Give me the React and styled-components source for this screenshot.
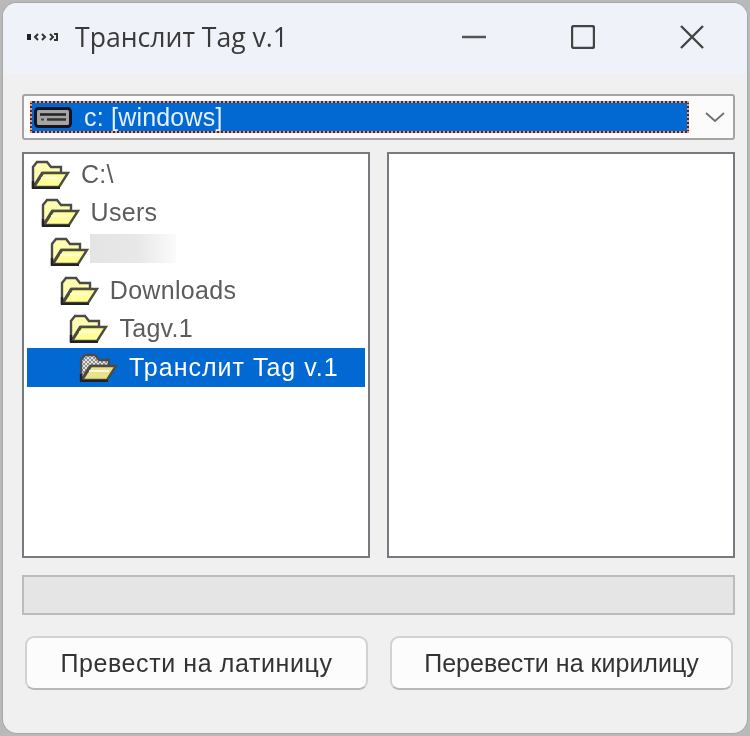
import React from 'react';
import styled, { createGlobalStyle } from 'styled-components';

const GlobalStyle = createGlobalStyle`
  html, body {
    margin: 0;
    padding: 0;
    width: 750px;
    height: 736px;
    overflow: hidden;
    background: #b9b9b9;
  }
  * { box-sizing: border-box; }
`;

const Page = styled.div`
  width: 750px;
  height: 736px;
  padding: 3px;
  filter: blur(0.5px);
`;

const Window = styled.div`
  width: 744px;
  height: 730px;
  display: flex;
  flex-direction: column;
  background: #f0f0f0;
  border-radius: 14px;
  box-shadow: 0 0 0 1px #a8a8a8;
  overflow: hidden;
  font-family: "Liberation Sans", Arial, sans-serif;
`;

const TitleBar = styled.div`
  height: 71px;
  flex: none;
  display: flex;
  align-items: center;
  padding: 0 1px 4px 24px;
  background: #eff3f9;
`;

const AppIcon = styled.svg`
  width: 32px;
  height: 10px;
  flex: none;
`;

const Title = styled.div`
  margin-left: 16px;
  flex: 1;
  font-family: "Open Sans", sans-serif;
  font-size: 26.6px;
  color: #3a3a3a;
`;

const WinButton = styled.div`
  width: 109px;
  height: 48px;
  flex: none;
  display: flex;
  align-items: center;
  justify-content: center;
`;

const Body = styled.div`
  flex: 1;
  display: flex;
  flex-direction: column;
  padding: 20px 12px 0 19px;
`;

const Combo = styled.div`
  height: 46px;
  display: flex;
  align-items: center;
  padding: 0 6px;
  background: #fbfbfb;
  border: 2px solid #a4a4a4;
  border-radius: 3px;
`;

const ComboSelection = styled.div`
  width: 659px;
  height: 32px;
  display: flex;
  align-items: center;
  padding-left: 2px;
  background: #0269d3;
  border: 2px solid #2a2a66;
  outline: 2px dotted #f59a5c;
  outline-offset: -2px;
  color: #e6f0ff;
  font-size: 25px;
`;

const ComboText = styled.span`
  margin-left: 12px;
  letter-spacing: 0.2px;
`;

const ComboArrow = styled.svg`
  width: 20px;
  height: 12px;
  margin-left: 16px;
  flex: none;
`;

const Panels = styled.div`
  display: flex;
  justify-content: space-between;
  margin-top: 12px;
`;

const Panel = styled.div`
  width: 348px;
  height: 406px;
  background: #fff;
  border: 2px solid #777b7f;
  padding: 1px 3px;
`;

const TreeRow = styled.div`
  height: 38.6px;
  display: flex;
  align-items: center;
  padding-left: ${(props) => 4 + props.level * 9.6}px;
  background: ${(props) => (props.selected ? '#0269d3' : 'transparent')};
  color: ${(props) => (props.selected ? '#ffffff' : '#5c5c5c')};
  font-size: 25px;
  letter-spacing: ${(props) => (props.selected ? '1px' : '0.3px')};
`;

const TreeLabel = styled.span`
  margin-left: 11px;
  white-space: nowrap;
`;

const HiddenName = styled.div`
  width: 86px;
  height: 29px;
  margin-left: 1px;
  margin-top: -5px;
  background: linear-gradient(90deg, #e4e4e4 0%, #e8e8e8 55%, #fbfbfb 100%);
`;

const Progress = styled.div`
  height: 40px;
  margin-top: 17px;
  background: #e5e5e5;
  border: 2px solid #bcbcbc;
`;

const Buttons = styled.div`
  display: flex;
  justify-content: space-between;
  margin-top: 21px;
  padding: 0 2px 0 3px;
`;

const Button = styled.div`
  width: 343px;
  height: 54px;
  display: flex;
  align-items: center;
  justify-content: center;
  background: #fcfcfc;
  border: 2px solid #d2d2d2;
  border-bottom-color: #b8b8b8;
  border-radius: 9px;
  color: #333333;
  font-size: 25px;
  letter-spacing: ${(props) => props.spacing}px;
`;

const FolderIcon = ({ selected }) => {
  const id = selected ? 'dither-sel' : 'dither';
  return (
    <svg width="39" height="29" viewBox="0 0 39 29" style={{ flex: 'none' }}>
      <defs>
        <pattern id={id} width="4" height="4" patternUnits="userSpaceOnUse">
          <rect width="4" height="4" fill={selected ? '#8e8e8e' : '#ffff90'} />
          <rect width="2" height="2" fill={selected ? '#e4e4e4' : '#fffbd0'} />
          <rect x="2" y="2" width="2" height="2" fill={selected ? '#e4e4e4' : '#fffbd0'} />
        </pattern>
      </defs>
      <path
        d="M2 27V7l4-5h10l4 5h10v6H11L3 26z"
        fill={`url(#${id})`}
        stroke="#4a4a4a"
        strokeWidth="2.4"
      />
      <path d="M3 27h25l9-14H12z" fill={selected ? '#e8e28c' : '#ffff96'} stroke="#4c4c40" strokeWidth="2.4" />
      <path d="M10 18h20" stroke="#fffff0" strokeWidth="1.6" />
      <path d="M1 28h28M2 21v7" stroke="#222" strokeWidth="2.4" />
    </svg>
  );
};

const DriveIcon = () => (
  <svg width="38" height="21" viewBox="0 0 38 21" style={{ flex: 'none' }}>
    <rect x="1.5" y="1.5" width="35" height="18" rx="3" fill="#a4a4a4" stroke="#141420" strokeWidth="3" />
    <path d="M6 7.5h26" stroke="#222" strokeWidth="2.4" />
    <path d="M13 12.5h19" stroke="#333" strokeWidth="2.4" />
    <path d="M7 12.5h3" stroke="#444" strokeWidth="2" />
  </svg>
);

const tree = [
  { level: 0, label: 'C:\\' },
  { level: 1, label: 'Users' },
  { level: 2, hidden: true },
  { level: 3, label: 'Downloads' },
  { level: 4, label: 'Tagv.1' },
  { level: 5, label: 'Транслит Tag v.1', selected: true },
];

export default function App() {
  return (
    <Page>
      <GlobalStyle />
      <Window>
        <TitleBar>
          <AppIcon viewBox="0 0 32 10">
            <rect x="0" y="2" width="4" height="6" fill="#222" />
            <path d="M11 2L8 5l3 3M15 2l3 3-3 3M23 2l3 3-3 3" fill="none" stroke="#333" strokeWidth="2" />
            <path d="M27 2h3v6h-3" fill="none" stroke="#333" strokeWidth="2" />
          </AppIcon>
          <Title>Транслит Tag v.1</Title>
          <WinButton>
            <svg width="24" height="4" viewBox="0 0 24 4">
              <path d="M0 2h24" stroke="#555" strokeWidth="2.4" />
            </svg>
          </WinButton>
          <WinButton>
            <svg width="24" height="24" viewBox="0 0 24 24">
              <rect x="1" y="1" width="22" height="22" rx="2" fill="none" stroke="#444" strokeWidth="2.4" />
            </svg>
          </WinButton>
          <WinButton>
            <svg width="26" height="26" viewBox="0 0 26 26">
              <path d="M2 2l22 22M24 2L2 24" stroke="#444" strokeWidth="2.4" />
            </svg>
          </WinButton>
        </TitleBar>
        <Body>
          <Combo>
            <ComboSelection>
              <DriveIcon />
              <ComboText>c: [windows]</ComboText>
            </ComboSelection>
            <ComboArrow viewBox="0 0 20 12">
              <path d="M1 2l9 8 9-8" fill="none" stroke="#707070" strokeWidth="1.8" />
            </ComboArrow>
          </Combo>
          <Panels>
            <Panel>
              {tree.map((row, i) => (
                <TreeRow key={i} level={row.level} selected={row.selected}>
                  <FolderIcon selected={row.selected} />
                  {row.hidden ? <HiddenName /> : <TreeLabel>{row.label}</TreeLabel>}
                </TreeRow>
              ))}
            </Panel>
            <Panel />
          </Panels>
          <Progress />
          <Buttons>
            <Button spacing={0.6}>Превести на латиницу</Button>
            <Button spacing={0.02}>Перевести на кирилицу</Button>
          </Buttons>
        </Body>
      </Window>
    </Page>
  );
}
